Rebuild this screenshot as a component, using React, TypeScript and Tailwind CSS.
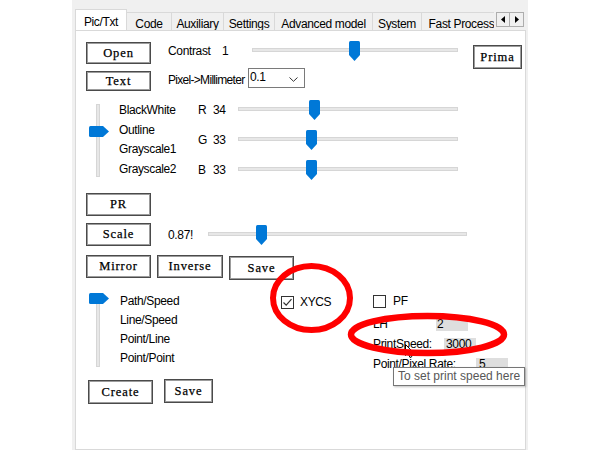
import React from "react";

const sans = "font-[family-name:'Liberation_Sans',Arial,sans-serif]";
const serif = "font-[family-name:'Liberation_Serif','Times_New_Roman',serif]";

const tabs = [
  { name: "Pic/Txt", w: "w-[52px]" },
  { name: "Code", w: "w-[45px]" },
  { name: "Auxiliary", w: "w-[52px]" },
  { name: "Settings", w: "w-[51px]" },
  { name: "Advanced model", w: "w-[98px]" },
  { name: "System", w: "w-[49px]" },
  { name: "Fast Process", w: "w-[80px]" },
];

function Btn({ label, className }: { label: string; className: string }) {
  return (
    <button
      className={`flex shrink-0 items-center justify-center bg-white border border-[#4a4a4a] shadow-[inset_0_0_0_1px_#9c9c9c] ${serif} text-[12.5px] tracking-[0.9px] text-black [-webkit-text-stroke:0.25px_#000] ${className}`}
    >
      {label}
    </button>
  );
}

// horizontal trackbar, thumb pointing down
function HSlider({ className, pos }: { className: string; pos: number }) {
  return (
    <div className={`relative h-[20px] shrink-0 ${className}`}>
      <div className="absolute left-0 right-0 top-[7px] h-[4px] bg-[#e7e7e7] border border-[#d6d6d6]" />
      <svg className="absolute top-0" style={{ left: pos }} width="11" height="20" viewBox="0 0 11 20">
        <path d="M1.5 0 H9.5 Q11 0 11 1.5 V14 L5.5 20 L0 14 V1.5 Q0 0 1.5 0 Z" fill="#0078d7" />
      </svg>
    </div>
  );
}

// vertical trackbar, thumb pointing right
function VSlider({ className, trackTop, pos }: { className: string; trackTop: number; pos: number }) {
  return (
    <div className={`relative w-[20px] shrink-0 ${className}`}>
      <div className="absolute left-[7px] w-[4px] bottom-0 bg-[#e7e7e7] border border-[#d6d6d6]" style={{ top: trackTop }} />
      <svg className="absolute left-0" style={{ top: pos }} width="20" height="11" viewBox="0 0 20 11">
        <path d="M1.5 0 H14 L20 5.5 L14 11 H1.5 Q0 11 0 9.5 V1.5 Q0 0 1.5 0 Z" fill="#0078d7" />
      </svg>
    </div>
  );
}

function Check({ checked }: { checked: boolean }) {
  return (
    <div className="w-[13px] h-[13px] border border-[#333] bg-white flex items-center justify-center shrink-0">
      {checked && (
        <svg width="11" height="11" viewBox="0 0 11 11">
          <path d="M1.5 5.5 L4.2 8.2 L9.5 2.2" fill="none" stroke="#333" strokeWidth="1.2" />
        </svg>
      )}
    </div>
  );
}

export default function App() {
  const label = "text-[12px] tracking-[-0.35px] text-black";

  return (
    <div className={`relative w-[600px] h-[450px] bg-white overflow-hidden ${sans}`}>
      <div className="ml-[72px] w-[456px] h-[450px] bg-[#f0f0f0] flex flex-col">
        {/* --- tab strip --- */}
        <div className="h-[30px] flex items-end shrink-0">
          <div className="ml-[3px] w-[419px] overflow-hidden flex items-end">
            {tabs.map((t, i) =>
              i === 0 ? (
                <div
                  key={t.name}
                  className={`${t.w} h-[22px] -mb-px relative z-10 shrink-0 bg-white border border-b-0 border-[#d9d9d9] flex justify-center pt-[3px] ${label}`}
                >
                  {t.name}
                </div>
              ) : (
                <div
                  key={t.name}
                  className={`${t.w} h-[18px] shrink-0 bg-[#f0f0f0] border border-b-0 border-l-0 border-[#d9d9d9] flex justify-center pt-[2px] whitespace-nowrap ${label}`}
                >
                  {t.name}
                </div>
              )
            )}
          </div>
          <div className="flex mb-[3px] ml-[2px]">
            <div className="w-[14px] h-[15px] border border-[#adadad] bg-[#f0f0f0] flex items-center justify-center">
              <svg width="4" height="7" viewBox="0 0 4 7"><path d="M4 0 V7 L0 3.5 Z" fill="#000" /></svg>
            </div>
            <div className="w-[14px] h-[15px] border border-l-0 border-[#adadad] bg-[#f0f0f0] flex items-center justify-center">
              <svg width="4" height="7" viewBox="0 0 4 7"><path d="M0 0 V7 L4 3.5 Z" fill="#000" /></svg>
            </div>
          </div>
        </div>

        {/* --- page --- */}
        <div className="flex-1 ml-[3px] mr-[2px] bg-white border border-[#d9d9d9] flex flex-col">
          {/* Open / Text / Contrast / Pixel */}
          <div className="mt-[10px] flex items-start">
            <div className="ml-[10px] flex flex-col">
              <Btn label="Open" className="mt-[1px] w-[65px] h-[22px]" />
              <Btn label="Text" className="mt-[7px] w-[65px] h-[20px]" />
            </div>
            <div className="ml-[17px] flex flex-col">
              <div className="h-[20px] flex items-center">
                <span className={`w-[54px] ${label}`}>Contrast</span>
                <span className={`w-[30px] ${label}`}>1</span>
                <HSlider className="w-[206px]" pos={97} />
              </div>
              <div className="mt-[7px] h-[20px] flex items-end">
                <span className="w-[80px] text-[12px] tracking-[-0.7px] text-black leading-[15px] whitespace-nowrap">Pixel-&gt;Millimeter</span>
                <div className={`relative w-[57px] h-[20px] border border-[#7a7a7a] bg-white ${label}`}>
                  <span className="absolute left-[1px] top-[2px] leading-[13px]">0.1</span>
                  <svg className="absolute right-[6px] top-[8px]" width="9" height="5" viewBox="0 0 9 5">
                    <path d="M0.5 0.5 L4.5 4.3 L8.5 0.5" fill="none" stroke="#333" strokeWidth="1" />
                  </svg>
                </div>
              </div>
            </div>
            <Btn label="Prima" className="ml-[15px] mt-[4px] w-[49px] h-[24px]" />
          </div>

          {/* mode + RGB */}
          <div className="mt-[9px] flex items-start">
            <VSlider className="ml-[13px] mt-[4px] h-[73px]" trackTop={0} pos={22} />
            <div className={`ml-[10px] mt-[1px] w-[79px] flex flex-col leading-[19.5px] ${label}`}>
              <span>BlackWhite</span>
              <span>Outline</span>
              <span>Grayscale1</span>
              <span>Grayscale2</span>
            </div>
            <div className="flex flex-col gap-[10px]">
              {[
                ["R", "34", 71],
                ["G", "33", 68],
                ["B", "33", 68],
              ].map(([c, v, p]) => (
                <div key={c as string} className="h-[20px] flex items-center">
                  <span className={`w-[15px] ${label}`}>{c}</span>
                  <span className={`w-[25px] ${label}`}>{v}</span>
                  <HSlider className="w-[220px]" pos={p as number} />
                </div>
              ))}
            </div>
          </div>

          {/* PR / Scale / Mirror */}
          <Btn label="PR" className="mt-[13px] ml-[10px] w-[65px] h-[23px]" />
          <div className="mt-[7px] ml-[10px] h-[23px] flex items-center">
            <Btn label="Scale" className="w-[65px] h-[23px]" />
            <span className={`ml-[17px] w-[40px] ${label} text-[#2e2a1e]`}>0.87!</span>
            <HSlider className="w-[259px]" pos={48} />
          </div>
          <div className="mt-[9px] ml-[10px] flex items-start">
            <Btn label="Mirror" className="w-[65px] h-[23px]" />
            <Btn label="Inverse" className="ml-[6px] w-[66px] h-[23px]" />
            <Btn label="Save" className="ml-[6px] mt-[1px] w-[65px] h-[24px]" />
          </div>

          {/* path mode + print settings */}
          <div className="mt-[11px] h-[88px] flex items-start">
            <VSlider className="ml-[13px] mt-[2px] h-[74px]" trackTop={9} pos={0} />
            <div className={`ml-[11px] w-[161px] mt-[1px] flex flex-col leading-[19px] ${label}`}>
              <span>Path/Speed</span>
              <span>Line/Speed</span>
              <span>Point/Line</span>
              <span>Point/Point</span>
            </div>
            <div className="w-[92px] mt-[2px] flex items-center">
              <Check checked />
              <span className={`ml-[6px] ${label}`}>XYCS</span>
            </div>
            <div className="flex flex-col">
              <div className="mt-[1px] flex items-center">
                <Check checked={false} />
                <span className={`ml-[7px] ${label}`}>PF</span>
              </div>
              <div className="mt-[4px] h-[20px] flex items-center">
                <span className={`w-[63px] ${label}`}>LH</span>
                <div className={`w-[32px] h-[13px] bg-[#dedede] pl-[1px] leading-[13px] ${label}`}>2</div>
              </div>
              <div className="h-[20px] flex items-center">
                <span className={`w-[71px] ${label}`}>PrintSpeed:</span>
                <div className={`w-[32px] h-[13px] bg-[#dedede] pl-[2px] leading-[13px] ${label}`}>3000</div>
              </div>
              <div className="h-[20px] flex items-center">
                <span className={`w-[103px] ${label}`}>Point/Pixel Rate:</span>
                <div className={`w-[32px] h-[13px] bg-[#dedede] pl-[3px] leading-[13px] ${label}`}>5</div>
              </div>
            </div>
          </div>

          <div className="flex items-start">
            <Btn label="Create" className="ml-[12px] mt-[1px] w-[65px] h-[24px]" />
            <Btn label="Save" className="ml-[11px] w-[49px] h-[24px]" />
          </div>
        </div>
      </div>

      {/* tooltip */}
      <div className="absolute left-[393px] top-[367px] w-[132px] h-[19px] bg-white border border-[#767676] shadow-[1px_1px_2px_rgba(0,0,0,0.25)] pl-[4px] text-[12px] leading-[17px] text-[#575757] whitespace-nowrap">
        To set print speed here
      </div>

      {/* mouse cursor */}
      <svg className="absolute left-[405px] top-[344px]" width="10" height="15" viewBox="0 0 10 15">
        <path d="M0.5 0.5 V11.5 L3 9 L5 13.5 L6.8 12.7 L4.9 8.5 H8.3 Z" fill="#fff" stroke="#000" strokeWidth="1" strokeLinejoin="round" />
      </svg>

      {/* red annotation rings */}
      <svg className="absolute inset-0 pointer-events-none" width="600" height="450" viewBox="0 0 600 450">
        <ellipse cx="311.5" cy="298" rx="38.5" ry="32" fill="none" stroke="#ff0000" strokeWidth="6" />
        <ellipse cx="427.5" cy="334.5" rx="76.5" ry="18.5" fill="none" stroke="#ff0000" strokeWidth="6.5" />
      </svg>
    </div>
  );
}
